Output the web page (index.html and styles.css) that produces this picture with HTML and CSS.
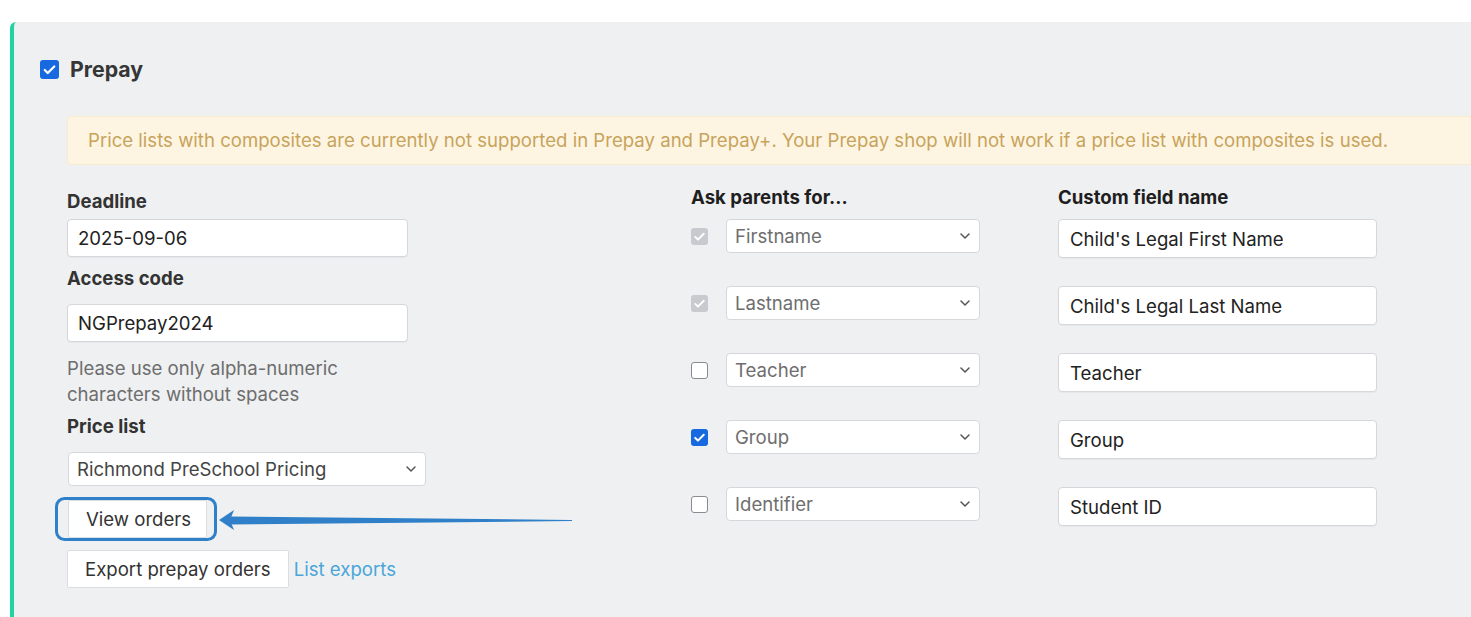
FILE: index.html
```html
<!DOCTYPE html>
<html lang="en">
<head>
<meta charset="utf-8">
<title>Prepay</title>
<link rel="stylesheet" href="styles.css">
</head>
<body>
<div class="page">
  <section class="panel">
    <div class="panel-head">
      <span class="cb cb-on"><svg viewBox="0 0 20 20"><path d="M5 10.5l3.2 3.2L15 6.8" fill="none" stroke="#fff" stroke-width="2.4" stroke-linecap="round" stroke-linejoin="round"/></svg></span>
      <span class="panel-title">Prepay</span>
    </div>
    <div class="panel-body">
      <div class="warning">Price lists with composites are currently not supported in Prepay and Prepay+. Your Prepay shop will not work if a price list with composites is used.</div>
      <div class="cols">
        <div class="col-left">
          <label class="lbl">Deadline</label>
          <input class="inp inp-left" type="text" value="2025-09-06">
          <label class="lbl lbl-access">Access code</label>
          <input class="inp inp-left inp-access" type="text" value="NGPrepay2024">
          <p class="help">Please use only alpha-numeric<br>characters without spaces</p>
          <label class="lbl">Price list</label>
          <div class="sel-wrap sel-price">
            <select class="sel sel-dark"><option>Richmond PreSchool Pricing</option></select>
            <svg class="chev" viewBox="0 0 10 6"><path d="M1 1l4 4 4-4" fill="none" stroke="#555" stroke-width="1.5" stroke-linecap="round" stroke-linejoin="round"/></svg>
          </div>
          <button class="btn btn-view">View orders</button>
          <div class="export-row">
            <button class="btn">Export prepay orders</button>
            <a class="link" href="#">List exports</a>
          </div>
        </div>
        <div class="fields">
          <div class="fields-head">
            <div class="lbl lbl-dark">Ask parents for...</div>
            <div class="lbl lbl-dark">Custom field name</div>
          </div>
          <div class="fields-grid">
            <div class="frow">
              <span class="cb cb-dis"><svg viewBox="0 0 20 20"><path d="M5 10.5l3.2 3.2L15 6.8" fill="none" stroke="#fff" stroke-width="2.2" stroke-linecap="round" stroke-linejoin="round"/></svg></span>
              <div class="sel-wrap sel-field">
                <select class="sel"><option>Firstname</option></select>
                <svg class="chev" viewBox="0 0 10 6"><path d="M1 1l4 4 4-4" fill="none" stroke="#555" stroke-width="1.5" stroke-linecap="round" stroke-linejoin="round"/></svg>
              </div>
            </div>
            <input class="inp inp-right" type="text" value="Child's Legal First Name">

            <div class="frow">
              <span class="cb cb-dis"><svg viewBox="0 0 20 20"><path d="M5 10.5l3.2 3.2L15 6.8" fill="none" stroke="#fff" stroke-width="2.2" stroke-linecap="round" stroke-linejoin="round"/></svg></span>
              <div class="sel-wrap sel-field">
                <select class="sel"><option>Lastname</option></select>
                <svg class="chev" viewBox="0 0 10 6"><path d="M1 1l4 4 4-4" fill="none" stroke="#555" stroke-width="1.5" stroke-linecap="round" stroke-linejoin="round"/></svg>
              </div>
            </div>
            <input class="inp inp-right" type="text" value="Child's Legal Last Name">

            <div class="frow">
              <span class="cb cb-off"></span>
              <div class="sel-wrap sel-field">
                <select class="sel"><option>Teacher</option></select>
                <svg class="chev" viewBox="0 0 10 6"><path d="M1 1l4 4 4-4" fill="none" stroke="#555" stroke-width="1.5" stroke-linecap="round" stroke-linejoin="round"/></svg>
              </div>
            </div>
            <input class="inp inp-right" type="text" value="Teacher">

            <div class="frow">
              <span class="cb cb-on cb-small"><svg viewBox="0 0 20 20"><path d="M5 10.5l3.2 3.2L15 6.8" fill="none" stroke="#fff" stroke-width="2.4" stroke-linecap="round" stroke-linejoin="round"/></svg></span>
              <div class="sel-wrap sel-field">
                <select class="sel"><option>Group</option></select>
                <svg class="chev" viewBox="0 0 10 6"><path d="M1 1l4 4 4-4" fill="none" stroke="#555" stroke-width="1.5" stroke-linecap="round" stroke-linejoin="round"/></svg>
              </div>
            </div>
            <input class="inp inp-right" type="text" value="Group">

            <div class="frow">
              <span class="cb cb-off"></span>
              <div class="sel-wrap sel-field">
                <select class="sel"><option>Identifier</option></select>
                <svg class="chev" viewBox="0 0 10 6"><path d="M1 1l4 4 4-4" fill="none" stroke="#555" stroke-width="1.5" stroke-linecap="round" stroke-linejoin="round"/></svg>
              </div>
            </div>
            <input class="inp inp-right" type="text" value="Student ID">
          </div>
        </div>
      </div>
    </div>
  </section>
  <svg class="annotation" viewBox="0 0 1471 617" width="1471" height="617">
    <rect x="56.5" y="498.5" width="159" height="41" rx="8" ry="8" fill="none" stroke="#2f80c8" stroke-width="3"/>
    <polygon points="229,516.5 572,520 572,521 229,524.5" fill="#2f80c8"/>
    <polygon points="219,520 234,510 230,520 234,530" fill="#2f80c8"/>
  </svg>
</div>
</body>
</html>
```
FILE: styles.css
```css
* { box-sizing: border-box; }

html, body {
  margin: 0;
  padding: 0;
  background: #ffffff;
  height: 100%;
  overflow: hidden;
}

body {
  font-family: Inter, "Noto Sans", "Liberation Sans", sans-serif;
  color: #333;
}

.page {
  position: relative;
  width: 1471px;
  height: 617px;
  padding: 22px 0 0 10px;
}

.panel {
  height: 100%;
  background: #eff0f2;
  border-left: 4px solid #20d3a0;
  border-top-left-radius: 6px;
}

.panel-head {
  display: flex;
  align-items: center;
  gap: 11px;
  padding: 35px 0 0 26px;
}

.panel-title {
  font-size: 21.3px;
  font-weight: 700;
  line-height: 24px;
  color: #363636;
}

.cb {
  display: inline-flex;
  align-items: center;
  justify-content: center;
  width: 19px;
  height: 19px;
  border-radius: 3px;
  flex: none;
}
.cb svg { width: 100%; height: 100%; display: block; }
.cb-on { background: #1769e0; }
.cb-small { width: 17px; height: 17px; }
.cb-dis { width: 17px; height: 17px; background: #c9cad0; }
.cb-off { width: 17px; height: 17px; background: #fff; border: 1.5px solid #8a8a90; border-radius: 3px; }

.panel-body {
  padding: 35px 0 0 53px;
}

.warning {
  background: #fdf5e1;
  border: 1px solid #f8ecce;
  border-right: none;
  border-radius: 4px 0 0 4px;
  color: #c8a35c;
  font-size: 18.6px;
  line-height: 22px;
  padding: 12px 0 13px 20px;
  white-space: nowrap;
  overflow: hidden;
}

.cols {
  display: grid;
  grid-template-columns: 624px 1fr;
  margin-top: 21px;
}

.col-left {
  display: flex;
  flex-direction: column;
  align-items: flex-start;
  padding-top: 4px;
}

.lbl {
  display: block;
  font-size: 18.6px;
  line-height: 22px;
  font-weight: 700;
  color: #333;
}
.lbl-dark { color: #1e1e1e; }
.lbl-access { margin-top: 10px; }

.inp {
  font-family: inherit;
  font-size: 18.6px;
  color: #222;
  background: #fff;
  border: 1px solid #d6d7da;
  border-radius: 4px;
  box-shadow: 0 1px 1px rgba(0,0,0,0.04);
  padding: 0 10px;
  outline: none;
}
.inp-left {
  width: 341px;
  height: 38px;
  margin-top: 7px;
}
.inp-access { margin-top: 15px; }
.inp-right {
  width: 319px;
  height: 39px;
  padding-left: 11px;
}

.help {
  margin: 14px 0 8px;
  font-size: 18.6px;
  line-height: 25.5px;
  color: #6d6d6d;
}

.sel-wrap {
  position: relative;
}
.sel {
  appearance: none;
  -webkit-appearance: none;
  font-family: inherit;
  font-size: 18.6px;
  color: #6e6e6e;
  background: #fff;
  border: 1px solid #d6d7da;
  border-radius: 4px;
  width: 100%;
  height: 34px;
  padding: 0 28px 0 8px;
  outline: none;
}
.sel-dark { color: #444; }
.chev {
  position: absolute;
  right: 10px;
  top: 14px;
  width: 10px;
  height: 6px;
  pointer-events: none;
}
.sel-price {
  width: 358px;
  margin-top: 15px;
  margin-left: 1px;
}
.sel-field { width: 254px; }

.btn {
  font-family: inherit;
  font-size: 18.6px;
  color: #333;
  background: #fff;
  border: 1px solid #dcdde0;
  border-radius: 2px;
  height: 38px;
  padding: 0 17px;
  cursor: pointer;
}
.btn-view {
  margin-top: 14px;
  margin-left: 1px;
  padding: 0 15px 0 17px;
}

.export-row {
  display: flex;
  align-items: center;
  gap: 5px;
  margin-top: 12px;
}

.link {
  color: #4aa6d8;
  font-size: 18.6px;
  text-decoration: none;
}

.fields {
  display: flex;
  flex-direction: column;
}
.fields-head,
.fields-grid {
  display: grid;
  grid-template-columns: 367px 319px;
}
.fields-grid {
  grid-auto-rows: 39px;
  row-gap: 28px;
  align-items: start;
  margin-top: 11px;
}

.frow {
  display: flex;
  align-items: center;
  gap: 18px;
  height: 34px;
}

.annotation {
  position: absolute;
  left: 0;
  top: 0;
  pointer-events: none;
}
```
